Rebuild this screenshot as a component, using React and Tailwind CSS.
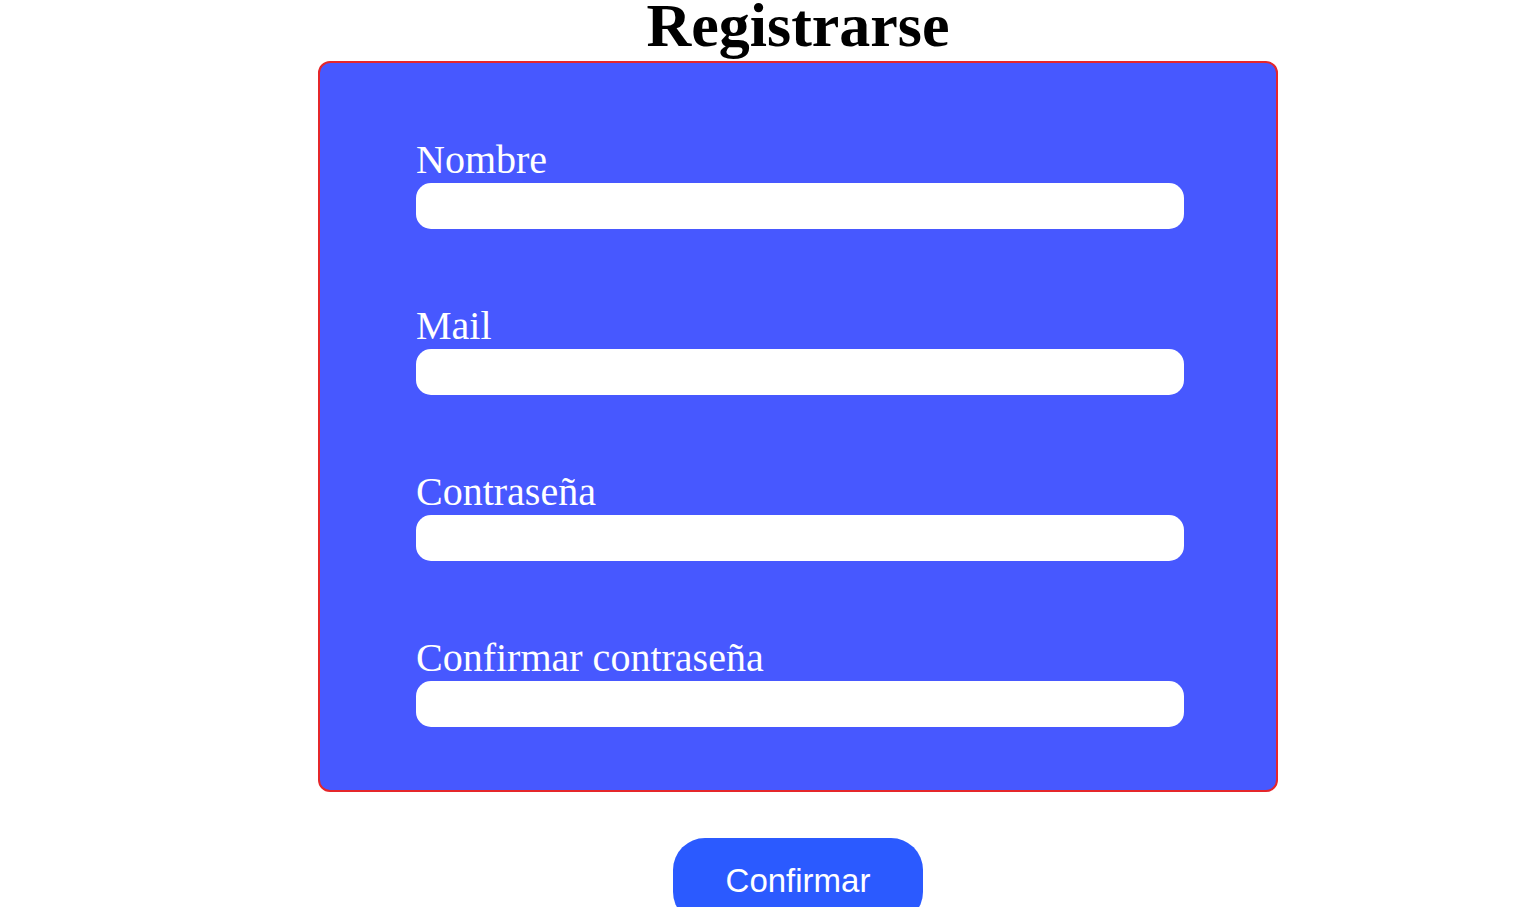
export default function App() {
  const fields = [
    { label: "Nombre", type: "text" },
    { label: "Mail", type: "email" },
    { label: "Contraseña", type: "password" },
    { label: "Confirmar contraseña", type: "password" },
  ]

  return (
    <div className="min-h-[907px] bg-white pl-[80px] overflow-hidden">
      <div className="flex flex-col items-center">
        <h1
          className="-mt-[10px] text-[62px] font-bold leading-[1.149] text-black"
          style={{ fontFamily: '"Liberation Serif", "Times New Roman", serif' }}
        >
          Registrarse
        </h1>

        {/* Form card */}
        <div className="w-[960px] rounded-[12px] border-2 border-[#e5262b] bg-[#4758ff] pl-[96px] pt-[74px] pb-[63px]">
          <div className="flex flex-col gap-[74px]">
            {fields.map((f) => (
              <div key={f.label} className="flex flex-col">
                <label
                  className="text-[40px] leading-[1.149] text-white"
                  style={{ fontFamily: '"Liberation Serif", "Times New Roman", serif' }}
                >
                  {f.label}
                </label>
                <input
                  type={f.type}
                  className="h-[46px] w-[768px] rounded-[15px] border-0 bg-white px-4 outline-none"
                />
              </div>
            ))}
          </div>
        </div>

        <button
          type="button"
          className="mt-[46px] w-[250px] rounded-[32px] bg-[#2b5aff] pt-6 pb-6 text-[33px] leading-[1.149] text-white"
          style={{ fontFamily: '"Liberation Sans", Arial, sans-serif' }}
        >
          Confirmar
        </button>
      </div>
    </div>
  )
}
